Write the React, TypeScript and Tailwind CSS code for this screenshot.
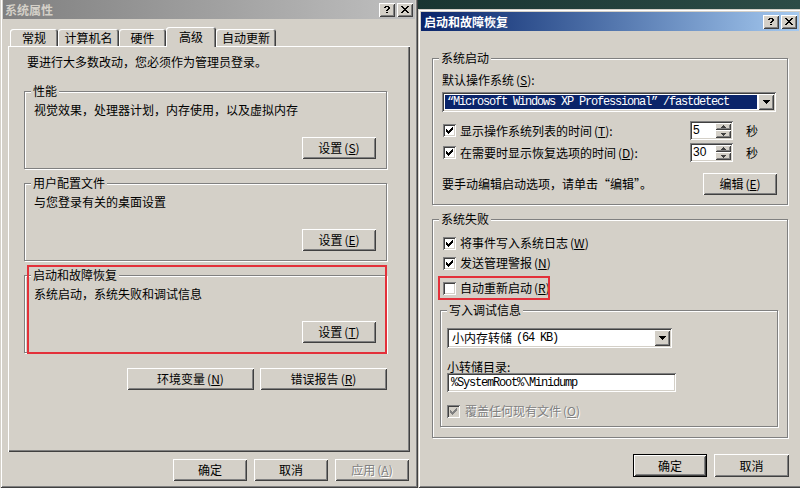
import React from "react"

const raised = "shadow-[inset_1px_1px_#fff,inset_-1px_-1px_#404040,inset_2px_2px_#d4d0c8,inset_-2px_-2px_#808080]"
const sunken = "shadow-[inset_1px_1px_#808080,inset_-1px_-1px_#fff,inset_2px_2px_#404040,inset_-2px_-2px_#d4d0c8]"
const frame = "shadow-[inset_1px_1px_#d4d0c8,inset_-1px_-1px_#404040,inset_2px_2px_#fff,inset_-2px_-2px_#808080]"
const mono = "font-['Liberation_Mono',monospace] text-[12px] [letter-spacing:-1.2px]"

const Btn = ({ children, className = "", disabled = false, primary = false }: { children: React.ReactNode; className?: string; disabled?: boolean; primary?: boolean }) => (
  <div
    className={`flex items-center justify-center bg-[#d4d0c8] ${raised} ${primary ? "border border-black" : ""} ${
      disabled ? "text-[#808080] [text-shadow:1px_1px_#fff]" : "text-black"
    } ${className}`}
  >
    {children}
  </div>
)

const Check = ({ checked = false, disabled = false }: { checked?: boolean; disabled?: boolean }) => (
  <span className={`relative block w-[13px] h-[13px] shrink-0 ${sunken} ${disabled ? "bg-[#d4d0c8]" : "bg-white"}`}>
    {checked && (
      <svg className="absolute left-[3px] top-[3px]" width="7" height="7" viewBox="0 0 7 7" shapeRendering="crispEdges">
        <path
          d="M6 0h1v1H6zM5 1h2v1H5zM0 2h1v1H0zM4 2h3v1H4zM0 3h2v1H0zM3 3h3v1H3zM0 4h5v1H0zM1 5h3v1H1zM2 6h1v1H2z"
          fill={disabled ? "#808080" : "#000"}
        />
      </svg>
    )}
  </span>
)

const Group = ({ label, className = "", children }: { label: string; className?: string; children?: React.ReactNode }) => (
  <div className={`relative flex flex-col border border-[#808080] shadow-[inset_1px_1px_#fff,1px_1px_#fff] ${className}`}>
    <span className="absolute left-[6px] top-[-8px] bg-[#d4d0c8] px-[2px] leading-[14px]">{label}</span>
    {children}
  </div>
)

const DownArrow = () => (
  <svg width="7" height="4" viewBox="0 0 7 4" shapeRendering="crispEdges">
    <path d="M0 0h7v1H0zM1 1h5v1H1zM2 2h3v1H2zM3 3h1v1H3z" fill="#000" />
  </svg>
)

const Combo = ({ children, selected = false, className = "" }: { children: React.ReactNode; selected?: boolean; className?: string }) => (
  <div className={`flex bg-white p-[2px] ${sunken} ${className}`}>
    <div className="flex-1 p-[1px]">
      <div className={`h-full flex items-center pl-[2px] whitespace-nowrap ${selected ? "bg-[#0a246a] text-white" : ""}`}>{children}</div>
    </div>
    <div className={`w-[16px] bg-[#d4d0c8] flex items-center justify-center ${raised}`}>
      <DownArrow />
    </div>
  </div>
)

const Spin = ({ value }: { value: string }) => (
  <div className={`flex w-[43px] h-[19px] p-[2px] bg-white ${sunken}`}>
    <div className="flex-1 pl-[1px] leading-[15px] font-['Liberation_Sans',sans-serif] text-[12px]">{value}</div>
    <div className="flex flex-col w-[16px]">
      <div className={`h-[7px] bg-[#d4d0c8] flex items-center justify-center ${raised}`}>
        <svg width="5" height="3" viewBox="0 0 5 3" shapeRendering="crispEdges">
          <path d="M2 0h1v1H2zM1 1h3v1H1zM0 2h5v1H0z" fill="#404040" />
        </svg>
      </div>
      <div className={`h-[8px] bg-[#d4d0c8] flex items-center justify-center ${raised}`}>
        <svg width="5" height="3" viewBox="0 0 5 3" shapeRendering="crispEdges">
          <path d="M0 0h5v1H0zM1 1h3v1H1zM2 2h1v1H2z" fill="#404040" />
        </svg>
      </div>
    </div>
  </div>
)

const TitleButtons = () => (
  <div className="flex gap-[2px]">
    <div className={`w-[16px] h-[14px] bg-[#d4d0c8] flex items-center justify-center ${raised}`}>
      <svg width="6" height="7" viewBox="0 0 6 7" shapeRendering="crispEdges">
        <path d="M1 0h4v1H1zM0 1h2v1H0zM4 1h2v1H4zM4 2h2v1H4zM3 3h2v1H3zM2 4h2v1H2zM2 6h2v1H2z" fill="#000" />
      </svg>
    </div>
    <div className={`w-[16px] h-[14px] bg-[#d4d0c8] flex items-center justify-center ${raised}`}>
      <svg width="8" height="7" viewBox="0 0 8 7" shapeRendering="crispEdges">
        <path
          d="M0 0h2v1H0zM6 0h2v1H6zM1 1h2v1H1zM5 1h2v1H5zM2 2h4v1H2zM3 3h2v1H3zM2 4h4v1H2zM1 5h2v1H1zM5 5h2v1H5zM0 6h2v1H0zM6 6h2v1H6z"
          fill="#000"
        />
      </svg>
    </div>
  </div>
)

const Key = ({ k }: { k: string }) => (
  <span className="ml-[2px]">
    (<u>{k}</u>)
  </span>
)

const tabs: [string, number, boolean][] = [
  ["常规", 48, false],
  ["计算机名", 61, false],
  ["硬件", 47, false],
  ["高级", 50, true],
  ["自动更新", 60, false],
]

const SettingsGroup = ({ label, text, k, className = "", children }: { label: string; text: string; k: string; className?: string; children?: React.ReactNode }) => (
  <Group label={label} className={`w-[363px] h-[78px] ${className}`}>
    <div className="mt-[11px] ml-[9px]">{text}</div>
    <Btn className="mt-[20px] mr-[10px] self-end w-[74px] h-[22px]">
      设置<Key k={k} />
    </Btn>
    {children}
  </Group>
)

const LeftWindow = () => (
  <div className={`absolute left-0 top-[-3px] w-[418px] h-[491px] bg-[#d4d0c8] p-[3px] flex flex-col ${frame}`}>
    <div className="h-[19px] flex items-center justify-between bg-linear-to-r from-[#808080] to-[#c0c0c0] pl-[2px] pr-[2px]">
      <span className="font-bold text-[#d4d0c8]">系统属性</span>
      <TitleButtons />
    </div>

    <div className="flex items-end h-[19px] mt-[8px] ml-[5px] pl-[2px]">
      {tabs.map(([name, w, active]) => (
        <div
          key={name}
          style={{ width: w }}
          className={`flex items-center justify-center rounded-t-[3px] bg-[#d4d0c8] shadow-[inset_1px_1px_#fff,inset_-1px_0_#404040,inset_-2px_0_#808080] ${
            active ? "relative z-10 h-[20px] -mb-[1px]" : "h-[17px]"
          }`}
        >
          {name}
        </div>
      ))}
    </div>

    <div className={`relative ml-[5px] w-[402px] h-[406px] pt-[9px] pl-[16px] flex flex-col shadow-[inset_1px_1px_#fff,inset_-1px_-1px_#404040,inset_-2px_-2px_#808080]`}>
      <div className="ml-[3px]">要进行大多数改动，您必须作为管理员登录。</div>
      <SettingsGroup className="mt-[22px]" label="性能" text="视觉效果，处理器计划，内存使用，以及虚拟内存" k="S" />
      <SettingsGroup className="mt-[14px]" label="用户配置文件" text="与您登录有关的桌面设置" k="E" />
      <SettingsGroup className="mt-[14px]" label="启动和故障恢复" text="系统启动，系统失败和调试信息" k="T">
        <div className="absolute left-[2px] top-[-11px] w-[360px] h-[89px] border-2 border-[#e3303a] pointer-events-none" />
      </SettingsGroup>
      <div className="mt-[15px] w-[363px] flex justify-end gap-[6px]">
        <Btn className="w-[127px] h-[22px]">
          环境变量<Key k="N" />
        </Btn>
        <Btn className="w-[127px] h-[22px]">
          错误报告<Key k="R" />
        </Btn>
      </div>
    </div>

    <div className="flex justify-end gap-[7px] mt-[7px] pr-[6px]">
      <Btn className="w-[74px] h-[22px]">确定</Btn>
      <Btn className="w-[74px] h-[22px]">取消</Btn>
      <Btn disabled className="w-[74px] h-[22px]">
        应用<Key k="A" />
      </Btn>
    </div>
  </div>
)

const CheckRow = ({ label, k, checked, className = "" }: { label: string; k: string; checked?: boolean; className?: string }) => (
  <div className={`flex items-center h-[14px] pl-[10px] ${className}`}>
    <Check checked={checked} />
    <span className="ml-[4px]">
      {label}
      <Key k={k} />
    </span>
  </div>
)

const RightWindow = () => (
  <div className={`absolute left-[418px] top-[9px] w-[384px] h-[479px] bg-[#d4d0c8] p-[3px] flex flex-col ${frame}`}>
    <div className="h-[19px] flex items-center justify-between bg-linear-to-r from-[#0a246a] to-[#a6caf0] pl-[3px] pr-[2px]">
      <span className="font-bold text-white">启动和故障恢复</span>
      <TitleButtons />
    </div>

    <Group label="系统启动" className="ml-[11px] mt-[27px] w-[356px] h-[147px]">
      <div className="mt-[14px] ml-[9px]">
        默认操作系统<Key k="S" />:
      </div>
      <Combo selected className="mt-[5px] ml-[9px] w-[334px] h-[20px]">
        <span className={mono}>“Microsoft Windows XP Professional” /fastdetect</span>
      </Combo>
      <div className="mt-[9px] h-[19px] flex items-center pl-[10px]">
        <div className="w-[247px] flex items-center">
          <Check checked />
          <span className="ml-[4px]">
            显示操作系统列表的时间<Key k="T" />:
          </span>
        </div>
        <Spin value="5" />
        <span className="ml-[13px]">秒</span>
      </div>
      <div className="mt-[3px] h-[19px] flex items-center pl-[10px]">
        <div className="w-[247px] flex items-center">
          <Check checked />
          <span className="ml-[4px]">
            在需要时显示恢复选项的时间<Key k="D" />:
          </span>
        </div>
        <Spin value="30" />
        <span className="ml-[13px]">秒</span>
      </div>
      <div className="mt-[11px] h-[22px] flex items-center pl-[9px]">
        <span>要手动编辑启动选项，请单击“编辑”。</span>
        <Btn className="ml-auto mr-[10px] w-[74px] h-[22px]">
          编辑<Key k="E" />
        </Btn>
      </div>
    </Group>

    <Group label="系统失败" className="ml-[11px] mt-[14px] w-[356px] h-[219px]">
      <CheckRow className="mt-[16px]" label="将事件写入系统日志" k="W" checked />
      <CheckRow className="mt-[6px]" label="发送管理警报" k="N" checked />
      <div className="relative mt-[11px]">
        <CheckRow label="自动重新启动" k="R" />
        <div className="absolute left-[5px] top-[-5px] w-[112px] h-[24px] border-2 border-[#e3303a] pointer-events-none" />
      </div>

      <Group label="写入调试信息" className="mt-[15px] ml-[7px] w-[338px] h-[117px]">
        <Combo className="mt-[17px] ml-[6px] w-[225px] h-[20px]">
          <span>小内存转储</span>
          <span className={`${mono} ml-[4px]`}>(64 KB)</span>
        </Combo>
        <div className="mt-[13px] ml-[6px] leading-[12px]">小转储目录:</div>
        <div className={`ml-[6px] w-[229px] h-[19px] bg-white flex items-center pl-[4px] ${sunken}`}>
          <span className={mono}>%SystemRoot%\Minidump</span>
        </div>
        <div className="mt-[12px] h-[14px] flex items-center pl-[6px]">
          <Check checked disabled />
          <span className="ml-[5px] text-[#808080] [text-shadow:1px_1px_#fff]">
            覆盖任何现有文件<Key k="O" />
          </span>
        </div>
      </Group>
    </Group>

    <div className="flex justify-end gap-[7px] mt-[16px] pr-[10px]">
      <Btn primary className="w-[74px] h-[23px]">确定</Btn>
      <Btn className="w-[75px] h-[23px]">取消</Btn>
    </div>
  </div>
)

export default function App() {
  return (
    <div className="relative w-[800px] h-[488px] overflow-hidden bg-linear-to-r from-[#2a4743] via-[#183430] to-[#2d4c47] font-['Noto_Sans_CJK_SC',sans-serif] text-[12px] leading-[14px] text-black">
      <LeftWindow />
      <RightWindow />
    </div>
  )
}
